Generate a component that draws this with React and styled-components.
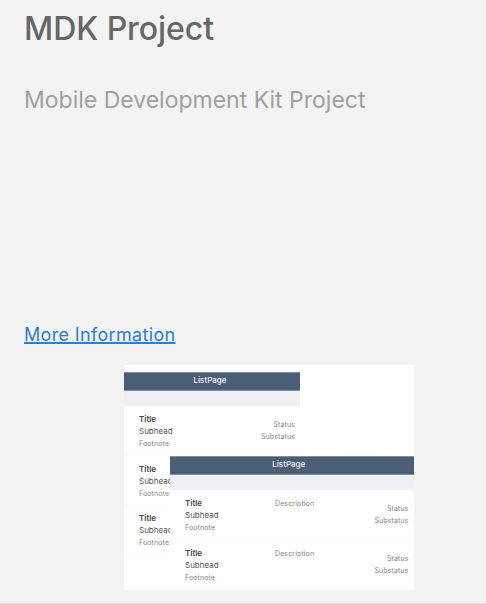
import React from "react";
import styled, { createGlobalStyle } from "styled-components";

const GlobalStyle = createGlobalStyle`
  * { box-sizing: border-box; }
  body {
    margin: 0;
    background: #f3f3f3;
    font-family: Inter, "Liberation Sans", sans-serif;
  }
`;

const Panel = styled.main`
  display: flex;
  flex-direction: column;
  align-items: flex-start;
  height: 604px;
  padding: 9px 24px 0;
  overflow: hidden;
  border-bottom: 1px solid #dcdcdc;
`;

const Heading = styled.h1`
  margin: 0;
  font-size: 32px;
  line-height: 40px;
  font-weight: 500;
  letter-spacing: -0.05px;
  color: #666;
  white-space: nowrap;
`;

const Summary = styled.p`
  margin: 35px 0 0;
  height: 235px;
  font-size: 23px;
  line-height: 32px;
  color: #a0a0a0;
  white-space: nowrap;
`;

const MoreLink = styled.a`
  font-size: 18px;
  line-height: 32px;
  letter-spacing: 0.34px;
  color: #2d7dd2;
  white-space: nowrap;
  text-decoration: underline;
  text-decoration-thickness: 2px;
  text-underline-offset: 1px;
  text-decoration-skip-ink: none;
`;

const Preview = styled.section`
  position: relative;
  width: 290px;
  height: 225px;
  margin: 14px 0 0 100px;
  padding-top: 7px;
  flex: none;
  background: #fff;
`;

const Window = styled.div`
  width: 176px;
  background: #fff;
`;

const FrontWindow = styled(Window)`
  position: absolute;
  left: 46px;
  top: 91px;
  width: 243.5px;
`;

const TitleBar = styled.div`
  height: 19px;
  background: #4a5f75;
  border: solid #8390a0;
  border-width: 0.5px 0;
  padding-right: ${(p) => p.$offset}px;
  color: #f4f5f7;
  font-size: 8px;
  line-height: 14px;
  font-weight: 500;
  text-align: center;
`;

const ToolStrip = styled.div`
  height: 15px;
  background: #efeff4;
`;

const Row = styled.div`
  display: grid;
  grid-template-columns: ${(p) => (p.$wide ? "90px 1fr auto" : "1fr auto")};
  height: 49.6px;
  margin: 0 5px 0 0;
  padding: 7px 0 0 15px;
  border-bottom: 1px solid #fafafa;
`;

const Column = styled.div`
  display: flex;
  flex-direction: column;
  align-items: ${(p) => (p.$end ? "flex-end" : "flex-start")};
  padding-top: ${(p) => p.$top || 0}px;
`;

const Title = styled.span`
  font-size: 8px;
  line-height: 13px;
  font-weight: 600;
  color: #444;
`;

const Subhead = styled.span`
  font-size: 8px;
  line-height: 11px;
  margin-bottom: 1px;
  color: #555;
`;

const Note = styled.span`
  font-size: 7px;
  line-height: 12px;
  letter-spacing: 0.12px;
  color: #858585;
`;

function ListRow({ status, description }) {
  return (
    <Row $wide={Boolean(description)}>
      <Column>
        <Title>Title</Title>
        <Subhead>Subhead</Subhead>
        <Note>Footnote</Note>
      </Column>
      {description && (
        <Column $top={1}>
          <Note>Description</Note>
        </Column>
      )}
      {status && (
        <Column $end $top={6}>
          <Note>Status</Note>
          <Note>Substatus</Note>
        </Column>
      )}
    </Row>
  );
}

export default function App() {
  return (
    <>
      <GlobalStyle />
      <Panel>
        <Heading>MDK Project</Heading>
        <Summary>Mobile Development Kit Project</Summary>
        <MoreLink href="#">More Information</MoreLink>
        <Preview>
          <Window>
            <TitleBar $offset={4}>ListPage</TitleBar>
            <ToolStrip />
            <ListRow status />
            <ListRow />
            <ListRow />
          </Window>
          <FrontWindow>
            <TitleBar $offset={6}>ListPage</TitleBar>
            <ToolStrip />
            <ListRow status description />
            <ListRow status description />
          </FrontWindow>
        </Preview>
      </Panel>
    </>
  );
}
